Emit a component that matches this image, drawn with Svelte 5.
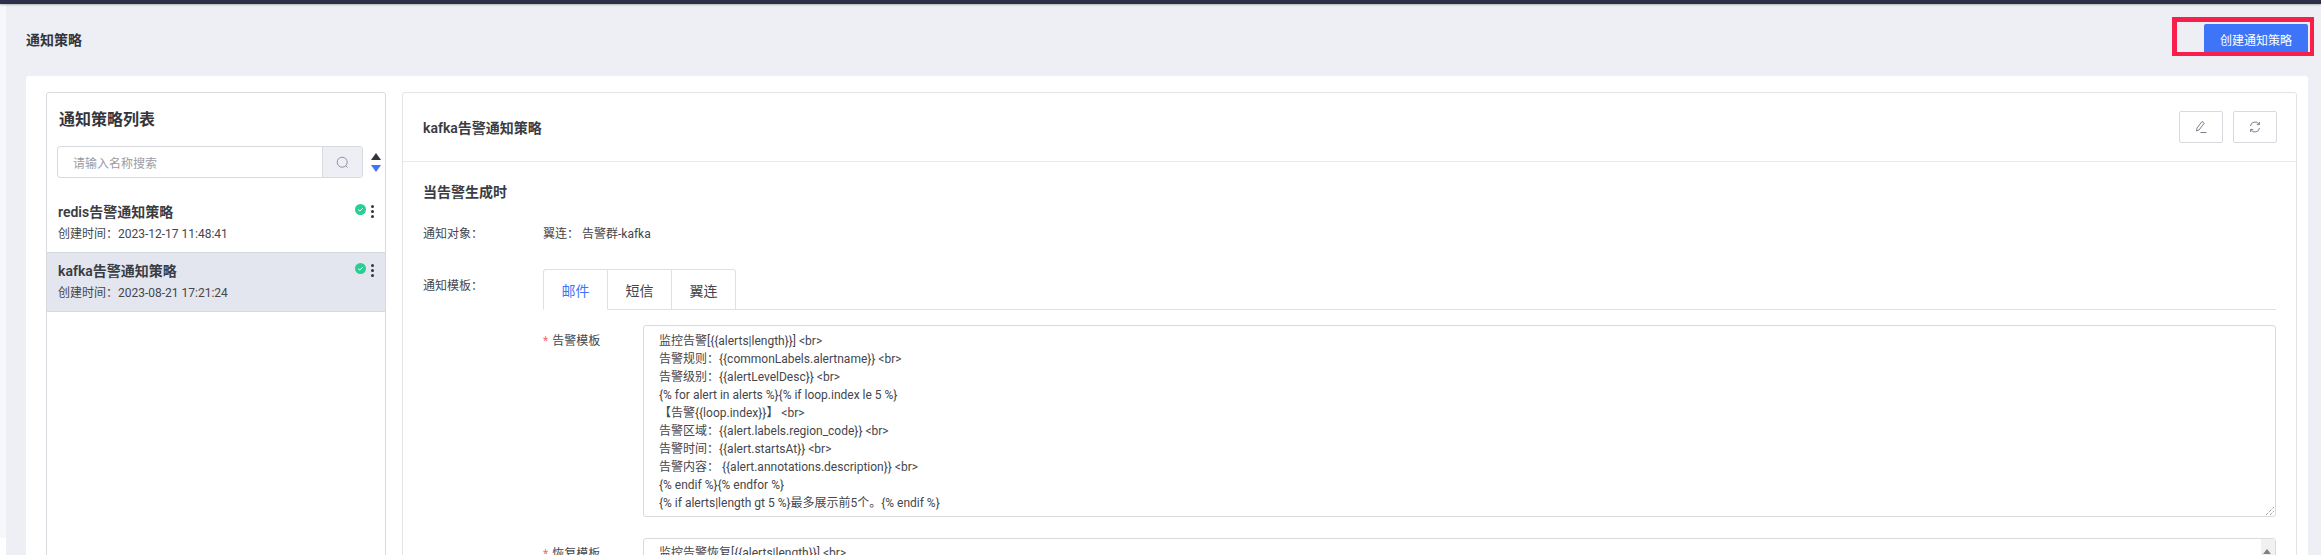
<script>
  const items = [
    { name: 'redis告警通知策略', time: '2023-12-17 11:48:41', active: false },
    { name: 'kafka告警通知策略', time: '2023-08-21 17:21:24', active: true }
  ];
  const tabs = ['邮件', '短信', '翼连'];
  const alertLines = [
    '监控告警[{{alerts|length}}] <br>',
    '告警规则：{{commonLabels.alertname}} <br>',
    '告警级别：{{alertLevelDesc}} <br>',
    '{% for alert in alerts %}{% if loop.index le 5 %}',
    '【告警{{loop.index}}】 <br>',
    '告警区域：{{alert.labels.region_code}} <br>',
    '告警时间：{{alert.startsAt}} <br>',
    '告警内容： {{alert.annotations.description}} <br>',
    '{% endif %}{% endfor %}',
    '{% if alerts|length gt 5 %}最多展示前5个。{% endif %}'
  ];
</script>

<div class="page">
  <div class="topbar"></div>
  <div class="body">
    <div class="rail"></div>
    <main class="main">
      <header class="head">
        <h1>通知策略</h1>
        <div class="create-wrap">
          <button class="create">创建通知策略</button>
        </div>
      </header>

      <section class="card">
        <aside class="list">
          <h2>通知策略列表</h2>
          <div class="search-row">
            <div class="search">
              <span class="placeholder">请输入名称搜索</span>
              <span class="search-btn">
                <svg width="13" height="13" viewBox="0 0 13 13" fill="none" stroke="#8d929c" stroke-width="1">
                  <circle cx="6.2" cy="6.2" r="5" />
                  <path d="M9.8 9.8 L11.6 11.6" />
                </svg>
              </span>
            </div>
            <div class="sort">
              <span class="up"></span>
              <span class="down"></span>
            </div>
          </div>

          {#each items as item}
            <div class="item" class:active={item.active}>
              <div class="item-top">
                <span class="item-name">{item.name}</span>
                <svg class="ok" width="11" height="11" viewBox="0 0 11 11">
                  <circle cx="5.5" cy="5.5" r="5.5" fill="#27cf93" />
                  <path d="M3.2 5.6 L4.9 7 L7.8 4.2" fill="none" stroke="#fff" stroke-width="1" />
                </svg>
                <span class="kebab"><i></i><i></i><i></i></span>
              </div>
              <div class="item-time">创建时间：{item.time}</div>
            </div>
          {/each}
        </aside>

        <div class="detail">
          <div class="detail-head">
            <span class="detail-title">kafka告警通知策略</span>
            <div class="actions">
              <button class="icon-btn" aria-label="编辑">
                <svg width="14" height="14" viewBox="0 0 14 14" fill="none" stroke="#7d7f86" stroke-width="1">
                  <path d="M2.5 11 L3 8 L8 1.5 L10.2 3.2 L5 10 Z" />
                  <path d="M6.5 12.5 H12.5" />
                </svg>
              </button>
              <button class="icon-btn" aria-label="刷新">
                <svg width="12" height="12" viewBox="0 0 12 12" fill="none" stroke="#7d7f86" stroke-width="1">
                  <path d="M1.5 5 A4.6 4.6 0 0 1 10 3.2" />
                  <path d="M10.5 7 A4.6 4.6 0 0 1 2 8.8" />
                  <path d="M10.4 1 V3.6 H7.8" />
                  <path d="M1.6 11 V8.4 H4.2" />
                </svg>
              </button>
            </div>
          </div>

          <div class="detail-body">
            <h3>当告警生成时</h3>
            <div class="row target">
              <span class="row-label">通知对象：</span>
              <span>翼连： 告警群-kafka</span>
            </div>
            <div class="row">
              <span class="row-label tpl-label">通知模板：</span>
              <div class="row-main">
                <div class="tabs">
                  {#each tabs as tab, i}
                    <span class="tab" class:on={i === 0}>{tab}</span>
                  {/each}
                </div>
                <div class="field">
                  <label class="req" for="tpl-alert">告警模板</label>
                  <div class="box" id="tpl-alert">
                    {#each alertLines as line}
                      <div class="line">{line}</div>
                    {/each}
                    <svg class="grip" width="8" height="8" viewBox="0 0 8 8" stroke="#777" stroke-width="1" stroke-dasharray="1 1">
                      <path d="M0 8 L8 0 M4 8 L8 4" />
                    </svg>
                  </div>
                </div>
                <div class="field">
                  <label class="req" for="tpl-recover">恢复模板</label>
                  <div class="box recover" id="tpl-recover">
                    <div class="line">监控告警恢复[{'{{'}alerts|length{'}}'}] &lt;br&gt;</div>
                    <span class="scroll"><i></i></span>
                  </div>
                </div>
              </div>
            </div>
          </div>
        </div>
      </section>
    </main>
  </div>
</div>

<style>
  :global(body) {
    margin: 0;
    background: #fff;
    font-family: Roboto, "Noto Sans CJK SC", sans-serif;
    font-size: 12px;
    color: #44464d;
  }

  .page {
    height: 555px;
    overflow: hidden;
    display: flex;
    flex-direction: column;
  }

  .topbar {
    height: 4px;
    flex: none;
    background: #2c2e4a;
    box-shadow: 0 1px 2px rgba(0, 0, 0, 0.25);
    position: relative;
  }

  .body {
    display: flex;
    flex: 1;
    min-height: 0;
  }

  .rail {
    width: 6px;
    height: 534px;
    flex: none;
    background: #f6f7fa;
  }

  .main {
    flex: 1;
    min-width: 0;
    background: #eeeff4;
    padding: 0 13px 0 20px;
  }

  .head {
    height: 72px;
    display: flex;
    justify-content: space-between;
    align-items: flex-start;
  }

  h1 {
    margin: 26px 0 0;
    font-size: 14px;
    line-height: 20px;
    font-weight: 600;
    color: #33353c;
  }

  .create-wrap {
    margin: 13px -6px 0 0;
    width: 133px;
    height: 30px;
    border: solid #f81f4c;
    border-width: 5px 4px 4px 5px;
    display: flex;
    justify-content: flex-end;
  }

  .create {
    width: 104px;
    height: 28px;
    margin-top: 2px;
    margin-right: 2px;
    border: 0;
    border-radius: 2px 2px 0 0;
    background: #3e75f8;
    color: #fff;
    font: inherit;
    font-size: 12px;
    padding: 2px 0 0;
  }

  .card {
    background: #fff;
    border-radius: 3px;
    padding: 16px 11px 0 20px;
    display: flex;
    gap: 16px;
    height: 600px;
  }

  .list {
    width: 340px;
    flex: none;
    box-sizing: border-box;
    border: 1px solid #d9dadf;
    border-radius: 3px 3px 0 0;
  }

  h2 {
    margin: 15px 0 0 12px;
    font-size: 16px;
    line-height: 24px;
    font-weight: 600;
    color: #33353c;
  }

  .search-row {
    display: flex;
    align-items: center;
    margin: 14px 0 14px 10px;
  }

  .search {
    width: 306px;
    height: 32px;
    box-sizing: border-box;
    border: 1px solid #d9dadf;
    border-radius: 3px;
    display: flex;
    justify-content: space-between;
    align-items: center;
    overflow: hidden;
  }

  .placeholder {
    padding-left: 15px;
    color: #9a9ca3;
  }

  .search-btn {
    width: 39px;
    height: 100%;
    background: #eeeff4;
    border-left: 1px solid #d9dadf;
    display: flex;
    align-items: center;
    justify-content: center;
  }

  .sort {
    margin-left: 8px;
    display: flex;
    flex-direction: column;
    gap: 5px;
  }

  .up,
  .down {
    width: 0;
    height: 0;
    border-left: 5.5px solid transparent;
    border-right: 5.5px solid transparent;
  }

  .up {
    border-bottom: 7px solid #33353c;
  }

  .down {
    border-top: 7px solid #3e75f8;
  }

  .item {
    height: 60px;
    box-sizing: border-box;
    padding: 7px 11px 0 11px;
  }

  .item.active {
    padding-top: 5px;
    background: #e3e6ee;
    border-top: 1px solid #d5d8de;
    border-bottom: 1px solid #d5d8de;
  }

  .item-top {
    display: flex;
    align-items: center;
    height: 24px;
  }

  .item-name {
    flex: 1;
    font-size: 14px;
    font-weight: 600;
    color: #3a3c43;
  }

  .ok {
    margin-top: -4px;
  }

  .kebab {
    margin-left: 5px;
    width: 3px;
    display: flex;
    flex-direction: column;
    gap: 2px;
  }

  .kebab i {
    width: 3px;
    height: 3px;
    border-radius: 50%;
    background: #33353c;
  }

  .item-time {
    margin-top: 1px;
    line-height: 20px;
  }

  .detail {
    flex: 1;
    min-width: 0;
    box-sizing: border-box;
    border: 1px solid #e3e4ea;
    border-radius: 3px 3px 0 0;
  }

  .detail-head {
    height: 69px;
    box-sizing: border-box;
    border-bottom: 1px solid #e9eaef;
    display: flex;
    justify-content: space-between;
    align-items: center;
    padding: 0 19px 0 20px;
  }

  .detail-title {
    font-size: 14px;
    font-weight: 600;
    color: #3a3c43;
  }

  .actions {
    display: flex;
    gap: 10px;
  }

  .icon-btn {
    width: 44px;
    height: 32px;
    padding: 0;
    background: #fff;
    border: 1px solid #d9dadf;
    border-radius: 2px;
    display: flex;
    align-items: center;
    justify-content: center;
  }

  .detail-body {
    padding: 20px 20px 0;
  }

  h3 {
    margin: 0;
    font-size: 14px;
    line-height: 20px;
    font-weight: 600;
    color: #3a3c43;
  }

  .row {
    display: flex;
  }

  .target {
    margin-top: 22px;
    line-height: 20px;
    margin-bottom: 25px;
  }

  .row-label {
    width: 120px;
    flex: none;
  }

  .tpl-label {
    line-height: 20px;
    padding-top: 7px;
  }

  .row-main {
    flex: 1;
    min-width: 0;
  }

  .tabs {
    display: flex;
    height: 40px;
    border-bottom: 1px solid #dfe0e6;
  }

  .tab {
    width: 64px;
    height: 41px;
    box-sizing: border-box;
    border: 1px solid #dfe0e6;
    border-left-width: 0;
    display: flex;
    align-items: center;
    justify-content: center;
    font-size: 14px;
    color: #44464d;
  }

  .tab:first-child {
    border-left-width: 1px;
    border-radius: 3px 0 0 0;
    width: 65px;
  }

  .tab:last-child {
    border-radius: 0 3px 0 0;
  }

  .tab.on {
    color: #3e75f8;
    border-bottom-color: #fff;
  }

  .field {
    display: flex;
    margin-top: 15px;
  }

  .field + .field {
    margin-top: 21px;
  }

  .req {
    width: 100px;
    flex: none;
    padding-top: 6px;
    line-height: 20px;
    font-size: 12px;
  }

  .req::before {
    content: "*";
    color: #f56c6c;
    margin-right: 4px;
  }

  .box {
    flex: 1;
    position: relative;
    height: 192px;
    box-sizing: border-box;
    border: 1px solid #d9dadf;
    border-radius: 3px;
    padding: 6px 15px;
  }

  .recover {
    padding-top: 5px;
  }

  .line {
    line-height: 18px;
    white-space: pre;
  }

  .grip {
    position: absolute;
    right: 1px;
    bottom: 1px;
  }

  .scroll {
    position: absolute;
    top: 0;
    right: 0;
    width: 14px;
    height: 100%;
    background: #f1f1f1;
  }

  .scroll i {
    position: absolute;
    top: 10px;
    left: 2px;
    width: 0;
    height: 0;
    border-left: 4.5px solid transparent;
    border-right: 4.5px solid transparent;
    border-bottom: 5px solid #808080;
  }
</style>
